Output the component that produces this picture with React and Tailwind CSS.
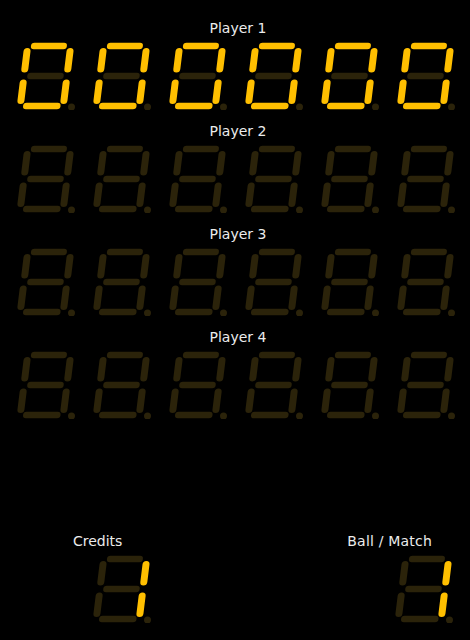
const LIT = '#ffbf00'
const DIM = '#2b230a'

// segment coordinates in unskewed local space (a..g)
const SEGMENTS = {
  a: [16.5, 6, 46, 6],
  b: [53, 11.5, 53, 29],
  c: [53, 43, 53, 60.5],
  d: [16, 66, 47, 66],
  e: [10, 43, 10, 60.5],
  f: [10, 11.5, 10, 29],
  g: [16.5, 36, 46.5, 36],
}

const DIGITS = {
  '0': 'abcdef',
  '1': 'bc',
  '': '',
}

const Digit = ({ value = '', dot = false }) => {
  const on = DIGITS[value] || ''
  return (
    <svg width="62" height="70" viewBox="0 0 62 70" className="block shrink-0">
      <g transform="translate(4.4 0) skewX(-7)">
        {Object.entries(SEGMENTS).map(([key, [x1, y1, x2, y2]]) => (
          <line
            key={key}
            x1={x1}
            y1={y1}
            x2={x2}
            y2={y2}
            stroke={on.includes(key) ? LIT : DIM}
            strokeWidth={x1 === x2 ? 7 : 6.5}
            strokeLinecap="round"
          />
        ))}
      </g>
      <circle cx="57.5" cy="67" r="3.5" fill={dot ? LIT : DIM} />
    </svg>
  )
}

const PlayerRow = ({ label, digits }) => (
  <div className="flex flex-col items-center pb-[11px]">
    <div className="h-5 leading-5 text-[14px] text-[#ececec] ml-[6px]">{label}</div>
    <div className="mt-[2px] flex gap-[14px]">
      {digits.map((d, i) => (
        <Digit key={i} value={d} />
      ))}
    </div>
  </div>
)

export default function App() {
  const players = [
    { label: 'Player 1', digits: ['0', '0', '0', '0', '0', '0'] },
    { label: 'Player 2', digits: ['', '', '', '', '', ''] },
    { label: 'Player 3', digits: ['', '', '', '', '', ''] },
    { label: 'Player 4', digits: ['', '', '', '', '', ''] },
  ]

  return (
    <div
      className="h-[640px] w-[470px] bg-black flex flex-col pt-[18px]"
      style={{ fontFamily: '"DejaVu Sans", Verdana, sans-serif' }}
    >
      {players.map(p => (
        <PlayerRow key={p.label} label={p.label} digits={p.digits} />
      ))}

      <div className="mt-auto flex justify-between pl-[73px] pr-[16px] pb-[17px]">
        <div className="flex flex-col items-start">
          <div className="h-5 leading-5 text-[14px] text-[#ececec]">Credits</div>
          <div className="mt-[2px] ml-[17px]">
            <Digit value="1" />
          </div>
        </div>
        <div className="flex flex-col items-end">
          <div className="h-5 leading-5 text-[14px] text-[#ececec] mr-[22px] tracking-[0.2px]">Ball / Match</div>
          <div className="mt-[2px]">
            <Digit value="1" />
          </div>
        </div>
      </div>
    </div>
  )
}
